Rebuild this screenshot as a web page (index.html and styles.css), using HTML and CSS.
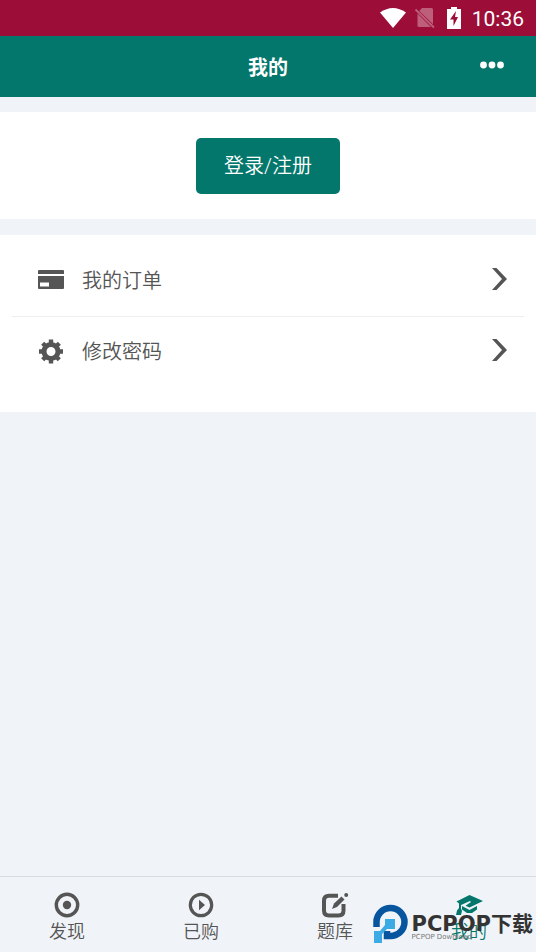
FILE: index.html
```html
<!DOCTYPE html>
<html lang="zh-CN">
<head>
<meta charset="utf-8">
<meta name="viewport" content="width=device-width, initial-scale=1">
<title>我的</title>
<link rel="stylesheet" href="styles.css">
</head>
<body>
<div class="status">
  <svg width="28" height="22" viewBox="0 0 28 22" fill="#fff" aria-hidden="true"><path d="M1 5.500Q14-3.500 27 5.500L14 21z"/></svg>
  <svg class="sim" width="22" height="22" viewBox="0 0 22 22" aria-hidden="true"><path fill="#bd5f7a" d="M8 1h9.500q1.500 0 1.500 1.500v14.800L5.200 4zM3.500 6.500L17 20H5q-1.500 0-1.500-1.500z"/><path d="M1.500 2.500l18.500 18" stroke="#bd5f7a" stroke-width="1.800"/></svg>
  <svg width="14" height="22" viewBox="0 0 14 22" aria-hidden="true"><path fill="#fff" d="M4 0h6v2h4v20H0V2h4z"/><path fill="#9c0d38" d="M9 4L3 12.500h3.500V19L11 10H8z"/></svg>
  <time>10:36</time>
</div>
<header class="header">
  <h1>我的</h1>
  <button class="more" aria-label="更多"><svg width="26" height="8" viewBox="0 0 26 8" fill="#fff"><circle cx="4.500" cy="4" r="3.400"/><circle cx="13" cy="4" r="3.400"/><circle cx="21.500" cy="4" r="3.400"/></svg></button>
</header>
<main class="content">
  <section class="login-card"><button class="login">登录/注册</button></section>
  <nav class="menu" aria-label="账户">
    <a class="row" href="#orders">
      <svg width="26" height="26" viewBox="0 0 26 26" fill="#555" aria-hidden="true"><path d="M1 2h24q1 0 1 1v3H0V3q0-1 1-1zM0 8h26v12q0 1-1 1H1q-1 0-1-1zM2 14.500v4h9v-4z" fill-rule="evenodd"/></svg>
      <span>我的订单</span>
      <svg class="chevron" width="16" height="22" viewBox="0 0 16 22" fill="#555" aria-hidden="true"><path d="M1 0h4.500L16 11 5.500 22H1l10-11z"/></svg>
    </a>
    <a class="row" href="#password">
      <svg width="26" height="26" viewBox="0 0 26 26" aria-hidden="true"><circle cx="13" cy="12.500" r="7" fill="none" stroke="#555" stroke-width="5"/><path d="M13 .5v5M13 19.500v5M1 12.500h5M20 12.500h5M4.700 4.200l3 3M18.300 17.800l3 3M4.700 20.800l3-3M18.300 7.200l3-3" stroke="#555" stroke-width="4.400"/></svg>
      <span>修改密码</span>
      <svg class="chevron" width="16" height="22" viewBox="0 0 16 22" fill="#555" aria-hidden="true"><path d="M1 0h4.500L16 11 5.500 22H1l10-11z"/></svg>
    </a>
  </nav>
</main>
<nav class="tabs" aria-label="主导航">
  <a href="#discover"><svg width="26" height="26" viewBox="0 0 26 26" aria-hidden="true"><circle cx="13" cy="13" r="10.700" fill="none" stroke="#555" stroke-width="3.400"/><circle cx="13" cy="13" r="4.200" fill="#555"/></svg><span>发现</span></a>
  <a href="#purchased"><svg width="26" height="26" viewBox="0 0 26 26" aria-hidden="true"><circle cx="13" cy="13" r="10.700" fill="none" stroke="#555" stroke-width="3.200"/><path d="M11 7.800v10.400l6-5.200z" fill="#555"/></svg><span>已购</span></a>
  <a href="#questions"><svg width="28" height="26" viewBox="0 0 28 26" aria-hidden="true"><path d="M17 3.800H8Q3 3.800 3 8.800v9.700q0 5 5 5h9.500q5 0 5-5V12" fill="none" stroke="#555" stroke-width="4"/><path d="M11 17l2-5.500 7.500-7 3 3-7.500 7.500z" fill="#555"/><circle cx="25.200" cy="3" r="2" fill="#555"/></svg><span>题库</span></a>
  <a class="active" href="#mine" aria-current="page"><svg width="28" height="26" viewBox="0 0 28 26" fill="#04776d" aria-hidden="true"><path d="M14.500 3l13.500 6-13.500 6.500-4-1.800L16 10l-1-1-9 4v3.500l1 2.500-1 4H1l1-4.500 2-2.500v-4.500L1.500 9.500zM7 14l7.500 4 7.500-4v3.500l-5 3.500h-5l-5-3.500z"/></svg><span>我的</span></a>
  <div class="watermark">
    <svg width="36" height="40" viewBox="0 0 36 40" aria-hidden="true"><path d="M3.500 23V18A14 14 0 1 1 17.500 32H14V27" fill="none" stroke="#07559f" stroke-width="6.500"/><path d="M12 15h10v10h-8l-5 5v9H1V27h6l5-6z" fill="#3baae5"/></svg>
    <div><strong>PCPOP下载</strong><small>PCPOP Download</small></div>
  </div>
</nav>
</body>
</html>
```
FILE: styles.css
```css
* { box-sizing: border-box; }
body {
  margin: 0;
  min-height: 100vh;
  display: flex;
  flex-direction: column;
  background: #f0f4f8;
  color: #555;
  font-family: Roboto, "Noto Sans CJK SC", sans-serif;
  font-weight: 350;
}
a { color: inherit; text-decoration: none; }
button { border: 0; padding: 0; font: inherit; cursor: pointer; }
svg { display: block; flex: none; }
.status {
  height: 36px;
  padding: 0 12px;
  display: flex;
  align-items: center;
  justify-content: flex-end;
  gap: 11px;
  background: #9c0d38;
  color: #fff;
}
.status .sim { margin-left: -4px; }
.status time { padding-top: 1px; font-size: 21px; line-height: 24px; font-weight: 400; }
.header {
  height: 61px;
  padding: 0 31px;
  display: grid;
  grid-template-columns: 1fr auto 1fr;
  align-items: center;
  background: #04776d;
  color: #fff;
}
.header h1 { grid-column: 2; margin: 0; padding-top: 2px; font-size: 20px; line-height: 30px; font-weight: 700; }
.more { justify-self: end; padding: 8px 0 12px; background: none; }
.content { flex: 1; padding-top: 15px; }
.login-card { padding: 26px 0 25px; background: #fff; text-align: center; }
.login {
  height: 56px;
  padding: 0 28px;
  border-radius: 5px;
  background: #04776d;
  color: #fff;
  font-size: 20px;
  line-height: 30px;
  vertical-align: top;
}
.menu { margin-top: 16px; padding: 11px 12px 26px; background: #fff; }
.row {
  height: 70px;
  padding: 0 17px 0 26px;
  display: flex;
  align-items: center;
  gap: 18px;
  font-size: 20px;
  line-height: 30px;
}
.row + .row { border-top: 1px solid #eee; }
.chevron { margin: 0 0 4px auto; }
.tabs {
  position: relative;
  height: 76px;
  padding-top: 15px;
  display: grid;
  grid-template-columns: repeat(4, 1fr);
  border-top: 1px solid #d9dcdf;
}
.tabs a { display: flex; flex-direction: column; align-items: center; font-size: 18px; line-height: 28px; }
.tabs .active { color: #04776d; }
.watermark { position: absolute; right: 3px; bottom: 8px; display: flex; gap: 3px; pointer-events: none; }
.watermark strong, .watermark small { display: block; white-space: nowrap; font-family: "DejaVu Sans", "Noto Sans CJK SC", sans-serif; }
.watermark strong { padding-top: 2px; color: #333; font-size: 21px; line-height: 36px; font-weight: 700; }
.watermark small { margin-top: -9px; color: #777; font-size: 7px; line-height: 8px; font-weight: 400; }
```
